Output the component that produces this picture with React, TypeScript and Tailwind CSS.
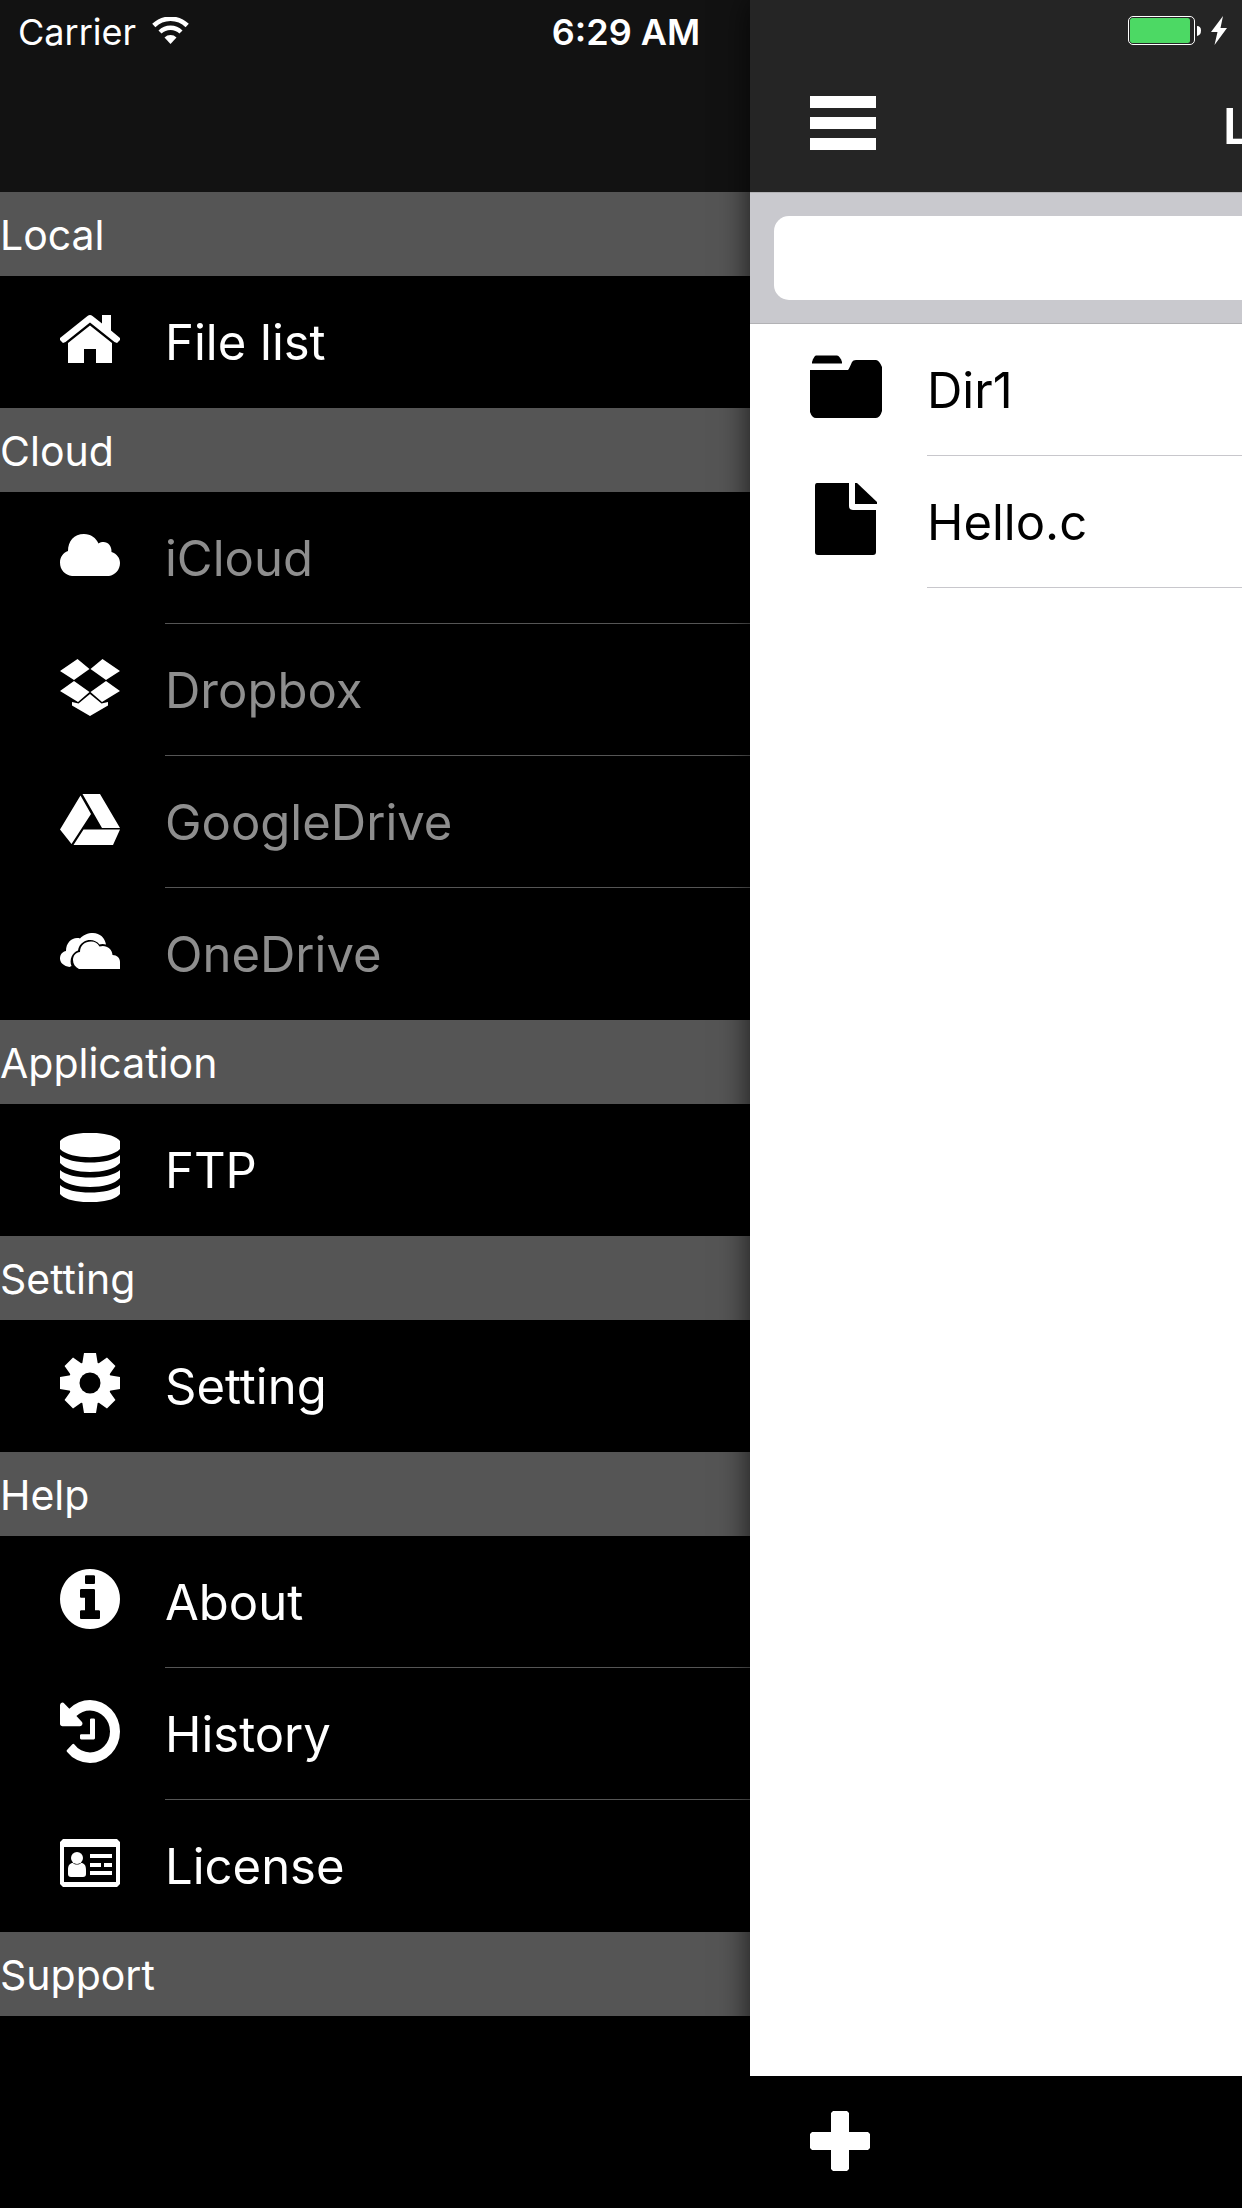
import type { ReactNode } from "react";

type Item = { label: string; icon: ReactNode; disabled?: boolean };
type Section = { title: string; items: Item[] };

const HomeIcon = () => (
  <svg viewBox="0 0 60 48" className="h-12 w-15" fill="currentColor" aria-hidden="true">
    <path d="M0 23 27.500 1Q30 -1 32.500 1L42 8.500V0H51V15.500L60 23V25L57 28L54.500 27L30 7.500L5.500 27L3 28L0 25Z" />
    <path d="M30 10.500 52 28V48H36V34H24V48H8V28Z" />
  </svg>
);

const CloudIcon = () => (
  <svg viewBox="0 0 60 42" className="h-[42px] w-15" fill="currentColor" aria-hidden="true">
    <path d="M12 42C5 41 0 36 0 28.500C0 23 3 19 8 17C8 7 14 0 24 0C31 0 36 4 38.500 9.500C45 5.500 52 10 51.500 18C57 20 60 24 60 29C60 36 55 41 49 42Z" />
  </svg>
);

const DropboxIcon = () => (
  <svg viewBox="0 0 60 57" className="h-[57px] w-15" fill="currentColor" aria-hidden="true">
    <path d="M17.500 0 29.500 10 14 21 0 12ZM42.500 0 60 12 46 21 30.500 10ZM14 22 29.500 33 18 43 0 32ZM46 22 60 32 42 43 30.500 33ZM30 35 41.500 44.500 48 43V46.500L30 57 12 46.500V43L18.500 44.500Z" />
  </svg>
);

const DriveIcon = () => (
  <svg viewBox="0 0 60 51" className="h-[51px] w-15" fill="currentColor" aria-hidden="true">
    <path d="M20.500 1.500 31 20 11.500 50 0 35.500ZM22.500 0H40L60 34H42ZM23.500 35.500H60L53 51H13.500Z" />
  </svg>
);

const OneDriveIcon = () => (
  <svg viewBox="0 0 60 36" className="h-9 w-15" fill="currentColor" aria-hidden="true">
    <path d="M9.500 34C4 33 0 30 0 25.500C0 21 3 18.500 6 18C6 9 13 3.500 20 5.500C23 2 28 0 33 0C40 0 45 5 46 11.500C43 10.500 41 11 39.500 11.500C36 7 29 5.500 23.500 9C20 11 18.500 14 18 17.500C12 19.500 9 27 11.500 33Z" />
    <path d="M19 36C15 34 13 31 13 27C13 22.500 16 19.500 20 19C20 12.500 25 8.500 31 8.500C35 8.500 37.500 10 39.500 13.500C46 11.500 52 15.500 52.500 22C57 22 60 25 60 29V36Z" />
  </svg>
);

const DatabaseIcon = () => (
  <svg viewBox="0 0 60 69" className="h-[69px] w-15" fill="currentColor" aria-hidden="true">
    <path d="M0 8C8 -3 52 -3 60 8V16C50 27 10 27 0 16Z" />
    <path d="M0 22C10 32 50 32 60 22V30C50 42 10 42 0 30ZM0 37C10 47 50 47 60 37V45C50 57 10 57 0 45ZM0 52C10 62 50 62 60 52V61C52 72 8 72 0 61Z" />
  </svg>
);

const GearIcon = () => (
  <svg viewBox="0 0 60 60" className="size-15" fill="currentColor" aria-hidden="true">
    {[0, 45, 90, 135].map((angle) => (
      <path
        key={angle}
        transform={`rotate(${angle} 30 30)`}
        d="M24 0H36L38 12H35.500V22H24.500V12H22ZM24 60H36L38 48H35.500V38H24.500V48H22Z"
      />
    ))}
    <path fillRule="evenodd" d="M30 8.500A21.500 21.500 0 1 0 30 51.500A21.500 21.500 0 1 0 30 8.500ZM30 19.500A10.500 10.500 0 1 1 30 40.500A10.500 10.500 0 1 1 30 19.500Z" />
    <circle cx="30" cy="30" r="10.500" fill="#000" />
  </svg>
);

const InfoIcon = () => (
  <svg viewBox="128 128 1536 1536" className="size-15" fill="currentColor" aria-hidden="true">
    <path d="M1152 1376v-160q0-14-9-23t-23-9h-96v-512q0-14-9-23t-23-9h-320q-14 0-23 9t-9 23v160q0 14 9 23t23 9h96v320h-96q-14 0-23 9t-9 23v160q0 14 9 23t23 9h448q14 0 23-9t9-23zm-128-896v-160q0-14-9-23t-23-9h-192q-14 0-23 9t-9 23v160q0 14 9 23t23 9h192q14 0 23-9t9-23zm640 416q0 209-103 385.500t-279.500 279.500-385.500 103-385.500-103-279.500-279.500-103-385.500 103-385.500 279.500-279.500 385.500-103 385.500 103 279.500 279.500 103 385.500z" />
  </svg>
);

const HistoryIcon = () => (
  <svg viewBox="128 128 1536 1536" preserveAspectRatio="none" className="h-[63px] w-15" fill="currentColor" aria-hidden="true">
    <path d="M1664 896q0 156-61 298t-164 245-245 164-298 61q-172 0-327-72.500t-264-204.500q-7-10-6.500-22.500t8.500-20.500l137-138q10-9 25-9 16 2 23 12 73 95 179 147t225 52q104 0 198.500-40.500t163.500-109.500 109.500-163.500 40.500-198.500-40.500-198.500-109.500-163.500-163.500-109.500-198.500-40.500q-98 0-188 35.500t-160 101.500l137 138q31 30 14 69-17 40-59 40h-448q-26 0-45-19t-19-45v-448q0-42 40-59 39-17 69 14l130 129q107-101 244.500-156.500t284.500-55.500q156 0 298 61t245 164 164 245 61 298zm-640-288v448q0 14-9 23t-23 9h-320q-14 0-23-9t-9-23v-64q0-14 9-23t23-9h224v-352q0-14 9-23t23-9h64q14 0 23 9t9 23z" />
  </svg>
);

const LicenseIcon = () => (
  <svg viewBox="0 0 60 48" className="h-12 w-15" fill="currentColor" aria-hidden="true">
    <path fillRule="evenodd" d="M3 0H57L60 3V45L57 48H3L0 45V3ZM4 8V43H56V8Z" />
    <circle cx="17" cy="19" r="6" />
    <path d="M8 35V31C8 26 10 24 13 24C15 26 19 26 21 24C24 24 26 26 26 31V35Q26 38 23 38H11Q8 38 8 35Z" />
    <path d="M30 15H52V19H30ZM30 24H41V28H30ZM44 24H52V28H44ZM30 32H52V36H30Z" />
  </svg>
);

const FolderIcon = () => (
  <svg viewBox="0 0 72 72" className="size-18" fill="currentColor" aria-hidden="true">
    <path d="M2 11Q4 5 6 4.500H27Q30 5 32 11V12.500H2Z" />
    <path d="M0 19H38Q39 18 42 11Q43 9 46 9H66Q69 9 72 16V60Q70 67 66 67H6Q2 67 0 61Z" />
  </svg>
);

const FileIcon = () => (
  <svg viewBox="0 0 72 72" className="size-18" fill="currentColor" aria-hidden="true">
    <path d="M7 0H39V23Q39 27 43 27H66V69Q66 72 63 72H8Q5 72 5 69V3Q5 0 7 0Z" />
    <path d="M45 0H47L67 19V21H45Z" />
  </svg>
);

const sections: Section[] = [
  { title: "Local", items: [{ label: "File list", icon: <HomeIcon /> }] },
  {
    title: "Cloud",
    items: [
      { label: "iCloud", icon: <CloudIcon />, disabled: true },
      { label: "Dropbox", icon: <DropboxIcon />, disabled: true },
      { label: "GoogleDrive", icon: <DriveIcon />, disabled: true },
      { label: "OneDrive", icon: <OneDriveIcon />, disabled: true },
    ],
  },
  { title: "Application", items: [{ label: "FTP", icon: <DatabaseIcon /> }] },
  { title: "Setting", items: [{ label: "Setting", icon: <GearIcon /> }] },
  {
    title: "Help",
    items: [
      { label: "About", icon: <InfoIcon /> },
      { label: "History", icon: <HistoryIcon /> },
      { label: "License", icon: <LicenseIcon /> },
    ],
  },
  { title: "Support", items: [] },
];

const files: Item[] = [
  { label: "Dir1", icon: <FolderIcon /> },
  { label: "Hello.c", icon: <FileIcon /> },
];

function StatusBar() {
  return (
    <div className="absolute inset-x-0 top-0 z-20 grid h-16 grid-cols-3 items-center text-[36px] leading-none text-white">
      <div className="flex items-center gap-4 pl-[18px]">
        <span>Carrier</span>
        <svg viewBox="0 0 37 31" className="h-[31px] w-[37px]" role="img" aria-label="Wi-Fi">
          <path d="M1.800 8.500A24 24 0 0 1 35.200 8.500" fill="none" stroke="#fff" strokeWidth="4.600" />
          <path d="M8 15A15.200 15.200 0 0 1 29 15" fill="none" stroke="#fff" strokeWidth="4.400" />
          <path d="M12.500 20.500A8.500 8.500 0 0 1 24.500 20.500L18.500 27Z" fill="#fff" />
        </svg>
      </div>
      <span className="pl-2.5 text-center font-semibold">6:29 AM</span>
      <div className="flex items-center justify-end gap-[10px] pr-[15px] pb-1">
        <svg viewBox="0 0 73 29" className="h-[29px] w-[73px]" role="img" aria-label="Battery">
          <rect x=".5" y=".5" width="66" height="28" rx="4.500" fill="none" stroke="#fff" />
          <rect x="2" y="2" width="60" height="25" rx="2.500" fill="#4cd964" />
          <path d="M69 10Q73 10 73 14.500T69 20Z" fill="#fff" />
        </svg>
        <svg viewBox="0 0 16 29" className="h-[29px] w-4" role="img" aria-label="Charging">
          <path d="M12 0 0 16H6.500L3.500 29 16 12H9.500Z" fill="#fff" />
        </svg>
      </div>
    </div>
  );
}

function Drawer() {
  return (
    <nav aria-label="Menu" className="w-[750px] shrink-0 bg-black text-white">
      <div className="h-48 bg-[#121212]" />
      {sections.map((section) => (
        <section key={section.title}>
          <h2 className="flex h-21 items-center bg-[#555] pt-0.5 text-[41px] leading-none">{section.title}</h2>
          <ul>
            {section.items.map((item, index) => (
              <li key={item.label}>
                <button type="button" disabled={item.disabled} className="flex h-33 w-full gap-[45px] pl-15 text-left">
                  <span className="flex w-15 items-center self-stretch pb-1.5">{item.icon}</span>
                  <span
                    className={`flex flex-1 items-center self-stretch border-b pt-0.5 text-[49px] leading-none ${
                      index < section.items.length - 1 ? "border-[#555]" : "border-transparent"
                    } ${item.disabled ? "text-[#8e8e8e]" : "text-white"}`}
                  >
                    {item.label}
                  </span>
                </button>
              </li>
            ))}
          </ul>
        </section>
      ))}
    </nav>
  );
}

function FilePane() {
  return (
    <main className="z-10 flex min-w-0 flex-1 flex-col bg-white text-black shadow-[0_0_30px_rgba(0,0,0,0.7)]">
      <header className="flex h-48 items-end justify-between bg-[#252525] pl-15 text-white">
        <button type="button" aria-label="Toggle menu" className="pb-[42px]">
          <svg viewBox="0 0 66 54" className="h-[54px] w-[66px]" fill="currentColor" aria-hidden="true">
            <path d="M0 0H66V12H0ZM0 21H66V33H0ZM0 42H66V54H0Z" />
          </svg>
        </button>
        <h1 className="w-[19px] pb-[38px] text-[49px] leading-[54px] font-semibold">L</h1>
      </header>
      <div className="flex h-33 items-center border-y border-[#b2b2b5] bg-[#c9c9ce] pl-6">
        <input
          type="search"
          aria-label="Search"
          className="h-21 w-full rounded-l-[15px] bg-white px-6 text-[41px] outline-none"
        />
      </div>
      <ul className="flex-1">
        {files.map((file) => (
          <li key={file.label}>
            <button type="button" className="flex h-33 w-full gap-[45px] pl-15 text-left">
              <span className="flex w-18 items-center self-stretch pb-1.5">{file.icon}</span>
              <span className="flex flex-1 items-center self-stretch border-b border-[#c8c7cc] pt-0.5 text-[49px] leading-none">
                {file.label}
              </span>
            </button>
          </li>
        ))}
      </ul>
      <footer className="flex h-33 items-center bg-black pb-0.5 pl-15 text-white">
        <button type="button" aria-label="Add">
          <svg viewBox="0 0 60 60" className="size-15" fill="currentColor" aria-hidden="true">
            <path d="M23 0H37L39 2V21H58L60 23V37L58 39H39V58L37 60H23L21 58V39H2L0 37V23L2 21H21V2Z" />
          </svg>
        </button>
      </footer>
    </main>
  );
}

export default function App() {
  return (
    <div className="relative flex min-h-screen overflow-hidden bg-black font-['Inter',sans-serif]">
      <StatusBar />
      <Drawer />
      <FilePane />
    </div>
  );
}
